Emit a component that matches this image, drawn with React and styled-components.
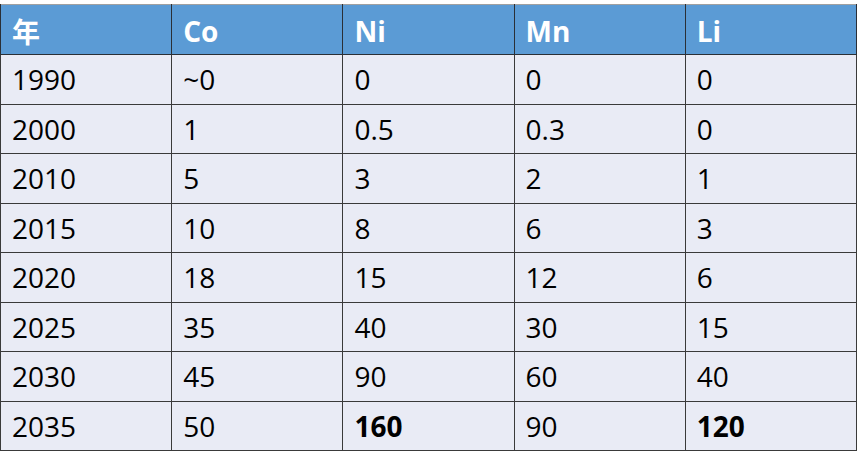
import React from 'react';
import styled, { createGlobalStyle } from 'styled-components';

const GlobalStyle = createGlobalStyle`
body {
  margin:0;
  background:#ffffff;
}
`

const Wrapper = styled.div`
padding-top:4px;
width:858px;
height:462px;
`

const Table = styled.table`
width:857px;
border-collapse:collapse;
table-layout:fixed;
font-family:"Open Sans","Noto Sans CJK SC",sans-serif;
font-size:28px;
color:#000;
border-top:1px solid #a0a0a0;
border-left:1px solid #8c8c8c;
`

const HeadCell = styled.th`
height:50px;
padding:2px 0 0 11px;
text-align:left;
font-weight:700;
color:#fff;
background-color:#5b9bd5;
border:1px solid #2a2f36;
border-top:none;
box-sizing:border-box;
`

const Cell = styled.td`
height:49.5px;
padding:0 0 0 11px;
text-align:left;
font-weight:${p => (p.$bold ? 700 : 400)};
background-color:#e9ebf5;
border:1px solid #3a3a3a;
box-sizing:border-box;
`

const headers = ['年', 'Co', 'Ni', 'Mn', 'Li'];

const rows = [
    ['1990', '~0', '0', '0', '0'],
    ['2000', '1', '0.5', '0.3', '0'],
    ['2010', '5', '3', '2', '1'],
    ['2015', '10', '8', '6', '3'],
    ['2020', '18', '15', '12', '6'],
    ['2025', '35', '40', '30', '15'],
    ['2030', '45', '90', '60', '40'],
    ['2035', '50', '160', '90', '120'],
];

// bold values in the last row
const boldCells = { '2035-2': true, '2035-4': true };

const App = () => {
    return <Wrapper>
        <GlobalStyle />
        <Table>
            <thead>
                <tr>
                    {headers.map(h => <HeadCell key={h}>{h}</HeadCell>)}
                </tr>
            </thead>
            <tbody>
                {rows.map(r => (
                    <tr key={r[0]}>
                        {r.map((v, i) => (
                            <Cell key={i} $bold={boldCells[`${r[0]}-${i}`]}>{v}</Cell>
                        ))}
                    </tr>
                ))}
            </tbody>
        </Table>
    </Wrapper>;
};

export default App;
